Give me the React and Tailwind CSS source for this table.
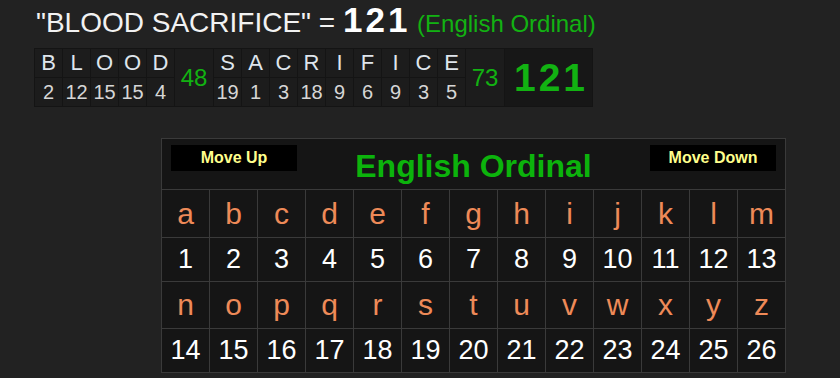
import React from "react";

const word1 = [["B", 2], ["L", 12], ["O", 15], ["O", 15], ["D", 4]];
const word2 = [
  ["S", 19], ["A", 1], ["C", 3], ["R", 18], ["I", 9],
  ["F", 6], ["I", 9], ["C", 3], ["E", 5],
];

const letters = "abcdefghijklmnopqrstuvwxyz".split("");

function LetterCol({ ch, val }) {
  return (
    <div className="flex w-[27px] flex-col gap-px">
      <div className="flex h-[28px] items-center justify-center bg-[#1c1c1c] text-[22px] leading-none text-[#dfe5ec]">
        {ch}
      </div>
      <div className="flex h-[28px] items-center justify-center bg-[#1c1c1c] text-[20px] leading-none text-[#d6d6d6]">
        {val}
      </div>
    </div>
  );
}

function SumCell({ value }) {
  return (
    <div className="flex w-[38px] items-center justify-center bg-[#1c1c1c] text-[24px] leading-none text-[#12b212]">
      {value}
    </div>
  );
}

function CipherRow({ start }) {
  const row = letters.slice(start, start + 13);
  return (
    <>
      {row.map((l) => (
        <div key={l} className="flex items-center justify-center bg-[#151515] text-[30px] leading-none text-[#ee8a58]">
          {l}
        </div>
      ))}
      {row.map((l, i) => (
        <div key={l + "n"} className="flex items-center justify-center bg-[#151515] text-[27px] leading-none text-white">
          {start + i + 1}
        </div>
      ))}
    </>
  );
}

export default function App() {
  return (
    <div className="h-[378px] w-[840px] overflow-hidden bg-[#222222] pl-[34px] pt-[2px] font-['Liberation_Sans',Arial,sans-serif]">
      {/* phrase and total */}
      <div className="h-[46px] whitespace-nowrap pl-[2px] leading-[36px]">
        <span className="text-[28px] text-[#f2f2f2]">"BLOOD SACRIFICE" = </span>
        <span className="text-[35px] font-bold tracking-[3px] text-white">121</span>
        <span className="text-[24px] text-[#12b212]"> (English Ordinal)</span>
      </div>

      {/* letter breakdown */}
      <div className="flex h-[59px] w-fit gap-px bg-[#141414] p-px">
        {word1.map(([c, v], i) => (
          <LetterCol key={"a" + i} ch={c} val={v} />
        ))}
        <SumCell value={48} />
        {word2.map(([c, v], i) => (
          <LetterCol key={"b" + i} ch={c} val={v} />
        ))}
        <SumCell value={73} />
        <div className="flex w-[87px] items-center justify-center bg-[#171717] pl-[5px] text-[39px] font-bold leading-none tracking-[3px] text-[#12b212]">
          121
        </div>
      </div>

      {/* cipher chart */}
      <div className="ml-[127px] mt-[31px] grid w-fit grid-cols-[repeat(13,47px)] grid-rows-[50px_47px_43px_46px_43px] gap-px bg-[#3a3a3a] p-px">
        <div className="col-span-full flex items-start justify-between bg-[#151515] px-[9px] pt-[6px]">
          <button className="flex h-[26px] w-[126px] items-center justify-center bg-black text-[16px] font-bold leading-none text-[#ffff8c]">
            Move Up
          </button>
          <div className="self-center pb-[2px] text-[32px] font-bold leading-none text-[#0cb30c]">
            English Ordinal
          </div>
          <button className="flex h-[26px] w-[126px] items-center justify-center bg-black text-[16px] font-bold leading-none text-[#ffff8c]">
            Move Down
          </button>
        </div>
        <CipherRow start={0} />
        <CipherRow start={13} />
      </div>
    </div>
  );
}
